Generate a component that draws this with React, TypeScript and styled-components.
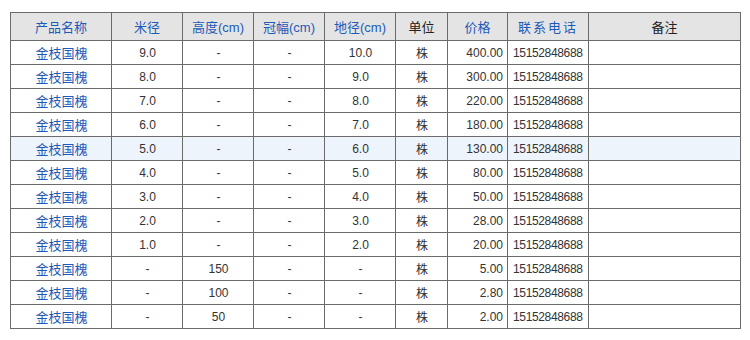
import styled, { createGlobalStyle } from "styled-components";

const GlobalStyle = createGlobalStyle`
  body {
    margin: 0;
    background: #ffffff;
    font-family: "Liberation Sans", Arial, "Noto Sans CJK SC", sans-serif;
  }
`;

type Align = "left" | "center" | "right";

const columns: { title: string; width: number; blue: boolean; spaced?: boolean }[] = [
  { title: "产品名称", width: 101, blue: true },
  { title: "米径", width: 71, blue: true },
  { title: "高度(cm)", width: 71, blue: true },
  { title: "冠幅(cm)", width: 71, blue: true },
  { title: "地径(cm)", width: 71, blue: true },
  { title: "单位", width: 52, blue: false },
  { title: "价格", width: 60, blue: true },
  { title: "联系电话", width: 81, blue: true, spaced: true },
  { title: "备注", width: 152, blue: false },
];

const rows = [
  ["9.0", "-", "-", "10.0", "400.00"],
  ["8.0", "-", "-", "9.0", "300.00"],
  ["7.0", "-", "-", "8.0", "220.00"],
  ["6.0", "-", "-", "7.0", "180.00"],
  ["5.0", "-", "-", "6.0", "130.00"],
  ["4.0", "-", "-", "5.0", "80.00"],
  ["3.0", "-", "-", "4.0", "50.00"],
  ["2.0", "-", "-", "3.0", "28.00"],
  ["1.0", "-", "-", "2.0", "20.00"],
  ["-", "150", "-", "-", "5.00"],
  ["-", "100", "-", "-", "2.80"],
  ["-", "50", "-", "-", "2.00"],
];

const App = () => {
  return (
    <StPage>
      <GlobalStyle />
      <StTable>
        <colgroup>
          {columns.map((c) => (
            <col key={c.title} style={{ width: c.width }} />
          ))}
        </colgroup>
        <thead>
          <tr>
            {columns.map((c) => (
              <StHeadCell key={c.title} $blue={c.blue} $spaced={c.spaced}>
                {c.title}
              </StHeadCell>
            ))}
          </tr>
        </thead>
        <tbody>
          {rows.map((r, i) => (
            <StRow key={i} $active={i === 4}>
              <StCell $align="center" $blue>
                金枝国槐
              </StCell>
              <StCell $align="center">{r[0]}</StCell>
              <StCell $align="center">{r[1]}</StCell>
              <StCell $align="center">{r[2]}</StCell>
              <StCell $align="center">{r[3]}</StCell>
              <StCell $align="center">株</StCell>
              <StCell $align="right">{r[4]}</StCell>
              <StCell $align="left" $tight>
                15152848688
              </StCell>
              <StCell $align="left"></StCell>
            </StRow>
          ))}
        </tbody>
      </StTable>
    </StPage>
  );
};

export default App;

const StPage = styled.div`
  padding: 12px 10px 0 10px;
`;

const StTable = styled.table`
  width: 730px;
  table-layout: fixed;
  border-collapse: collapse;
  font-size: 12px;
  border: 1px solid #6b6b6b;
`;

const StHeadCell = styled.th<{ $blue: boolean; $spaced?: boolean }>`
  height: 27px;
  padding: 0;
  background: #e4e4e4;
  border: 1px solid #6b6b6b;
  font-weight: normal;
  font-size: 13px;
  text-align: center;
  color: ${(p) => (p.$blue ? "#1d5bb8" : "#222222")};
  letter-spacing: ${(p) => (p.$spaced ? "2px" : "0")};
`;

const StRow = styled.tr<{ $active?: boolean }>`
  background: ${(p) => (p.$active ? "#eef4fc" : "#ffffff")};
`;

const StCell = styled.td<{ $align: Align; $blue?: boolean; $tight?: boolean }>`
  height: 23px;
  padding: 0 4px 0 5px;
  border: 1px solid #6b6b6b;
  text-align: ${(p) => p.$align};
  color: ${(p) => (p.$blue ? "#1d5bb8" : "#333333")};
  font-size: ${(p) => (p.$blue ? "13px" : "12px")};
  letter-spacing: ${(p) => (p.$tight ? "-0.35px" : "0")};
  white-space: nowrap;
  overflow: hidden;
`;
